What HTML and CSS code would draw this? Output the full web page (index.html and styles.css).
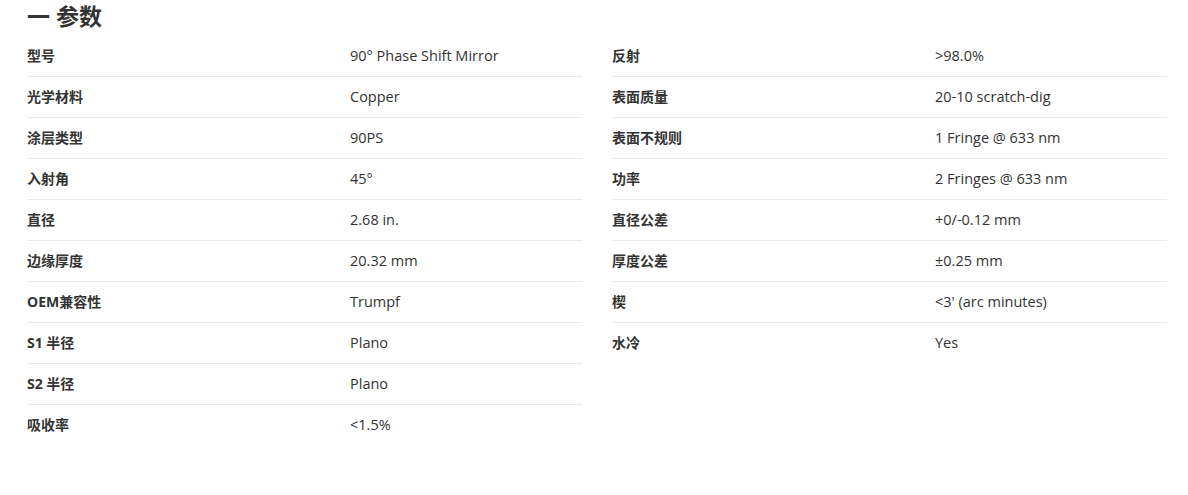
FILE: index.html
```html
<!DOCTYPE html>
<html lang="zh">
<head>
<meta charset="utf-8">
<link rel="stylesheet" href="styles.css">
</head>
<body>
<section class="params">
  <h2 class="title">一 参数</h2>
  <div class="cols">
    <div class="col">
      <div class="row"><span class="k">型号</span><span class="v">90° Phase Shift Mirror</span></div>
      <div class="row"><span class="k">光学材料</span><span class="v">Copper</span></div>
      <div class="row"><span class="k">涂层类型</span><span class="v">90PS</span></div>
      <div class="row"><span class="k">入射角</span><span class="v">45°</span></div>
      <div class="row"><span class="k">直径</span><span class="v">2.68 in.</span></div>
      <div class="row"><span class="k">边缘厚度</span><span class="v">20.32 mm</span></div>
      <div class="row"><span class="k">OEM兼容性</span><span class="v">Trumpf</span></div>
      <div class="row"><span class="k">S1 半径</span><span class="v">Plano</span></div>
      <div class="row"><span class="k">S2 半径</span><span class="v">Plano</span></div>
      <div class="row"><span class="k">吸收率</span><span class="v">&lt;1.5%</span></div>
    </div>
    <div class="col">
      <div class="row"><span class="k">反射</span><span class="v">&gt;98.0%</span></div>
      <div class="row"><span class="k">表面质量</span><span class="v">20-10 scratch-dig</span></div>
      <div class="row"><span class="k">表面不规则</span><span class="v">1 Fringe @ 633 nm</span></div>
      <div class="row"><span class="k">功率</span><span class="v">2 Fringes @ 633 nm</span></div>
      <div class="row"><span class="k">直径公差</span><span class="v">+0/-0.12 mm</span></div>
      <div class="row"><span class="k">厚度公差</span><span class="v">±0.25 mm</span></div>
      <div class="row"><span class="k">楔</span><span class="v">&lt;3' (arc minutes)</span></div>
      <div class="row"><span class="k">水冷</span><span class="v">Yes</span></div>
    </div>
  </div>
</section>
</body>
</html>
```
FILE: styles.css
```css
html, body {
  margin: 0;
  padding: 0;
  background: #fff;
}
body {
  font-family: "Open Sans", "Noto Sans CJK SC", sans-serif;
  color: #333;
}
.params {
  width: 1140px;
  margin-left: 27px;
}
.title {
  margin: 0;
  height: 36px;
  line-height: 32px;
  font-size: 23px;
  font-weight: 700;
  color: #333;
}
.cols {
  display: grid;
  grid-template-columns: 555px 555px;
  column-gap: 30px;
  align-items: start;
}
.row {
  display: flex;
  align-items: baseline;
  height: 41px;
  padding-top: 10px;
  box-sizing: border-box;
  border-bottom: 1px solid #eaeaea;
  font-size: 14.5px;
  line-height: 20px;
}
.row:last-child {
  border-bottom: none;
}
.k {
  width: 323px;
  flex: none;
  font-weight: 700;
  font-size: 14px;
}
.v {
  font-weight: 400;
}
```
